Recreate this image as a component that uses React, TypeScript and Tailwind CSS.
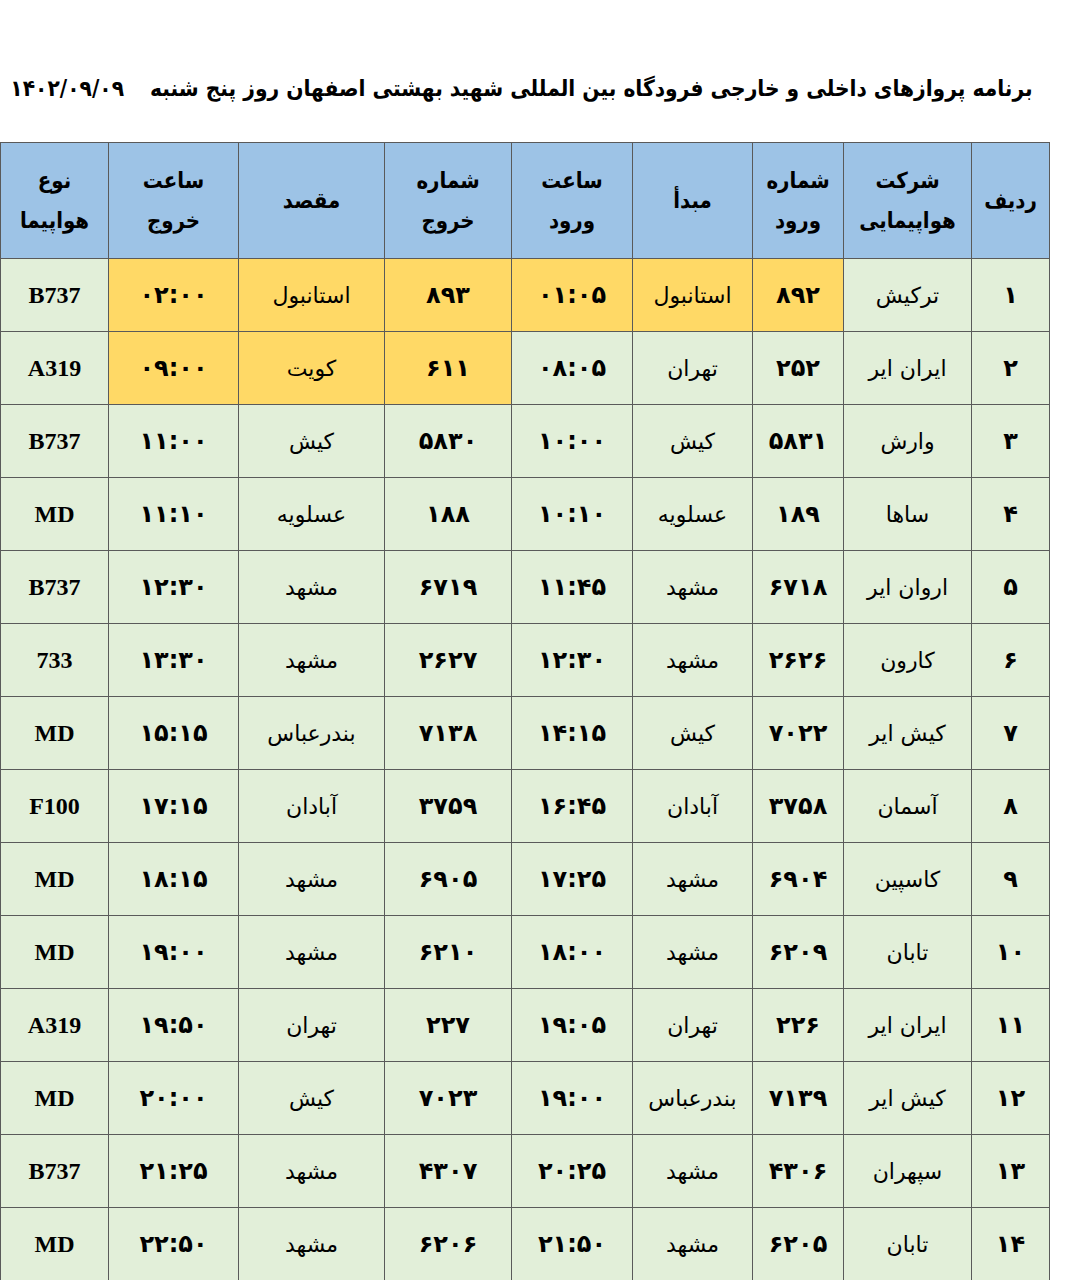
const headers: string[][] = [
  ['ردیف'],
  ['شرکت', 'هواپیمایی'],
  ['شماره', 'ورود'],
  ['مبدأ'],
  ['ساعت', 'ورود'],
  ['شماره', 'خروج'],
  ['مقصد'],
  ['ساعت', 'خروج'],
  ['نوع', 'هواپیما'],
];

const widths = ['w-[78px]', 'w-[128px]', 'w-[91px]', 'w-[120px]', 'w-[121px]', 'w-[127px]', 'w-[146px]', 'w-[130px]', 'w-[108px]'];

// columns: row, airline, arrival no, origin, arrival time, departure no, destination, departure time, aircraft
const rows: string[][] = [
  ['۱', 'ترکیش', '۸۹۲', 'استانبول', '۰۱:۰۵', '۸۹۳', 'استانبول', '۰۲:۰۰', 'B737'],
  ['۲', 'ایران ایر', '۲۵۲', 'تهران', '۰۸:۰۵', '۶۱۱', 'کویت', '۰۹:۰۰', 'A319'],
  ['۳', 'وارش', '۵۸۳۱', 'کیش', '۱۰:۰۰', '۵۸۳۰', 'کیش', '۱۱:۰۰', 'B737'],
  ['۴', 'ساها', '۱۸۹', 'عسلویه', '۱۰:۱۰', '۱۸۸', 'عسلویه', '۱۱:۱۰', 'MD'],
  ['۵', 'اروان ایر', '۶۷۱۸', 'مشهد', '۱۱:۴۵', '۶۷۱۹', 'مشهد', '۱۲:۳۰', 'B737'],
  ['۶', 'کارون', '۲۶۲۶', 'مشهد', '۱۲:۳۰', '۲۶۲۷', 'مشهد', '۱۳:۳۰', '733'],
  ['۷', 'کیش ایر', '۷۰۲۲', 'کیش', '۱۴:۱۵', '۷۱۳۸', 'بندرعباس', '۱۵:۱۵', 'MD'],
  ['۸', 'آسمان', '۳۷۵۸', 'آبادان', '۱۶:۴۵', '۳۷۵۹', 'آبادان', '۱۷:۱۵', 'F100'],
  ['۹', 'کاسپین', '۶۹۰۴', 'مشهد', '۱۷:۲۵', '۶۹۰۵', 'مشهد', '۱۸:۱۵', 'MD'],
  ['۱۰', 'تابان', '۶۲۰۹', 'مشهد', '۱۸:۰۰', '۶۲۱۰', 'مشهد', '۱۹:۰۰', 'MD'],
  ['۱۱', 'ایران ایر', '۲۲۶', 'تهران', '۱۹:۰۵', '۲۲۷', 'تهران', '۱۹:۵۰', 'A319'],
  ['۱۲', 'کیش ایر', '۷۱۳۹', 'بندرعباس', '۱۹:۰۰', '۷۰۲۳', 'کیش', '۲۰:۰۰', 'MD'],
  ['۱۳', 'سپهران', '۴۳۰۶', 'مشهد', '۲۰:۲۵', '۴۳۰۷', 'مشهد', '۲۱:۲۵', 'B737'],
  ['۱۴', 'تابان', '۶۲۰۵', 'مشهد', '۲۱:۵۰', '۶۲۰۶', 'مشهد', '۲۲:۵۰', 'MD'],
];

// yellow cells per row (row index -> column indexes)
const highlights: Record<number, number[]> = {
  0: [2, 3, 4, 5, 6, 7],
  1: [5, 6, 7],
};

const numCols = [0, 2, 4, 5, 7];
const wordCols = [1, 3, 6];

function cellClass(col: number) {
  if (numCols.includes(col)) return "font-bold text-[24px] font-['DejaVu_Sans',sans-serif]";
  if (wordCols.includes(col)) return "text-[22px] font-['DejaVu_Sans',sans-serif]";
  return "font-bold text-[24px] font-['Liberation_Serif',serif]";
}

export default function App() {
  return (
    <div className="w-[1065px] h-[1280px] overflow-hidden bg-white text-black">
      <div dir="rtl" className="h-[142px] pt-[66px] pl-[15px] pr-[37px] flex justify-center">
        <h1 className="font-['DejaVu_Sans_Condensed','DejaVu_Sans',sans-serif] font-bold text-[22.5px] leading-[44px] whitespace-nowrap">
          برنامه پروازهای داخلی و خارجی فرودگاه بین المللی شهید بهشتی اصفهان روز پنج شنبه
          <span className="mr-[26px]">۱۴۰۲/۰۹/۰۹</span>
        </h1>
      </div>
      <table dir="rtl" className="table-fixed border-collapse w-[1049px]">
        <thead>
          <tr className="h-[116px] bg-[#9dc3e6]">
            {headers.map((h, i) => (
              <th
                key={i}
                className={`${widths[i]} border border-[#5a5a5a] p-0 font-['DejaVu_Sans_Condensed','DejaVu_Sans',sans-serif] font-bold text-[22px] leading-[40px] text-center align-middle`}
              >
                {h.map((line) => (
                  <div key={line}>{line}</div>
                ))}
              </th>
            ))}
          </tr>
        </thead>
        <tbody>
          {rows.map((r, ri) => (
            <tr key={ri} className="h-[73px]">
              {r.map((c, ci) => (
                <td
                  key={ci}
                  className={`border border-[#5a5a5a] p-0 text-center align-middle ${
                    highlights[ri]?.includes(ci) ? 'bg-[#ffd966]' : 'bg-[#e2efd9]'
                  } ${cellClass(ci)}`}
                >
                  {c}
                </td>
              ))}
            </tr>
          ))}
        </tbody>
      </table>
    </div>
  );
}
